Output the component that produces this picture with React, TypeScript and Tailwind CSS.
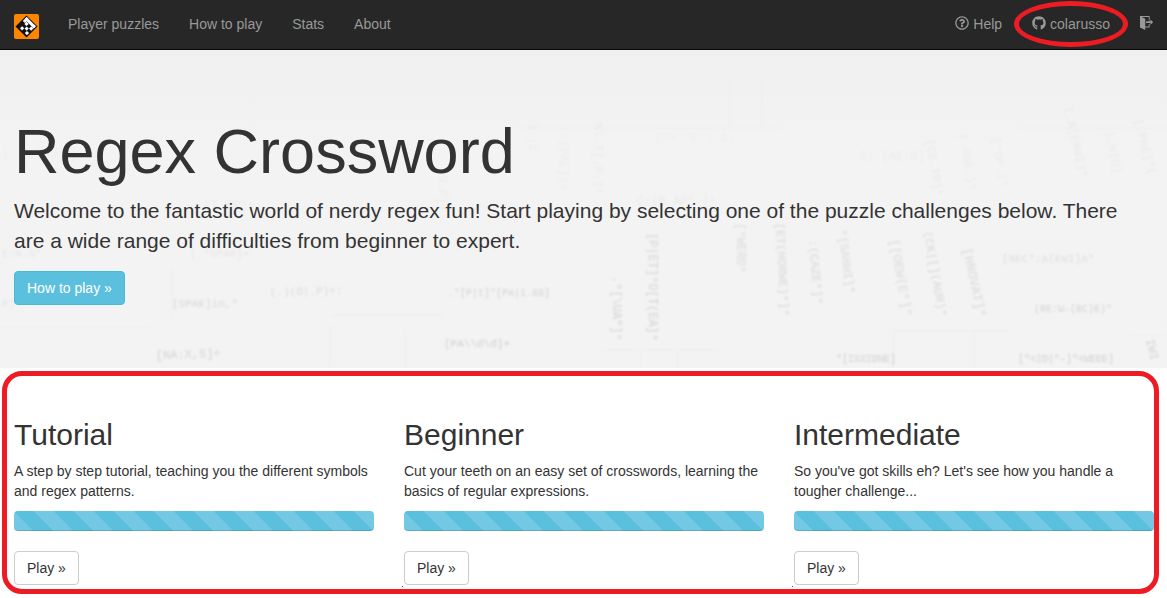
import { FaGithub, FaRegQuestionCircle } from "react-icons/fa";
import { ImExit } from "react-icons/im";

type Challenge = { title: string; text: string; dot: boolean };
type Clue = { x: number; y: number; text: string; rotate: number; size: number; opacity: number };

const links = ["Player puzzles", "How to play", "Stats", "About"];

const challenges: Challenge[] = [
  {
    title: "Tutorial",
    text: "A step by step tutorial, teaching you the different symbols and regex patterns.",
    dot: false,
  },
  {
    title: "Beginner",
    text: "Cut your teeth on an easy set of crosswords, learning the basics of regular expressions.",
    dot: true,
  },
  {
    title: "Intermediate",
    text: "So you've got skills eh? Let's see how you handle a tougher challenge...",
    dot: true,
  },
];

const clues: Clue[] = [
  { x: 172, y: 257, text: "[SPAE]in,*", rotate: 0, size: 11, opacity: 0.12 },
  { x: 270, y: 246, text: "(.)(O|.P)+:", rotate: -2, size: 11, opacity: 0.1 },
  { x: 156, y: 309, text: "[NA:X,S]+", rotate: -2, size: 12, opacity: 0.15 },
  { x: 2, y: 207, text: "E:N.S*", rotate: 0, size: 11, opacity: 0.06 },
  { x: 2, y: 257, text: "P)*", rotate: 0, size: 11, opacity: 0.06 },
  { x: 2, y: 108, text: "[.N.SPE.]+", rotate: 0, size: 14, opacity: 0.02 },
  { x: 190, y: 207, text: "[.*SPAN]+", rotate: 0, size: 11, opacity: 0.06 },
  { x: 204, y: 159, text: "(I.NP)+", rotate: 0, size: 12, opacity: 0.04 },
  { x: 448, y: 246, text: ".*[P|t]*[PA|i.88]", rotate: 0, size: 10, opacity: 0.14 },
  { x: 444, y: 297, text: "[PA\\\\d\\d]+", rotate: 0, size: 11, opacity: 0.16 },
  { x: 454, y: 197, text: "[.PAE]*+", rotate: 0, size: 12, opacity: 0.03 },
  { x: 655, y: 92, text: "[SN.*P.|.A]", rotate: 0, size: 12, opacity: 0.02 },
  { x: 637, y: 155, text: "C:[N.AP*.]*", rotate: 0, size: 12, opacity: 0.04 },
  { x: 860, y: 110, text: "S|.[AE.N]", rotate: 0, size: 12, opacity: 0.03 },
  { x: 613, y: 226, text: ".*[\\UA\"]*", rotate: 90, size: 12, opacity: 0.14 },
  { x: 649, y: 183, text: "[P|ET]*O[T(EA]*", rotate: 90, size: 12, opacity: 0.14 },
  { x: 560, y: 83, text: ".[PAE]|+", rotate: 90, size: 12, opacity: 0.03 },
  { x: 594, y: 73, text: "N\\.T[.P.]*", rotate: 90, size: 12, opacity: 0.04 },
  { x: 527, y: 73, text: "T.|F.", rotate: 90, size: 12, opacity: 0.03 },
  { x: 439, y: 118, text: "[N.P]+", rotate: 90, size: 12, opacity: 0.04 },
  { x: 737, y: 173, text: "[*WERO*", rotate: 90, size: 12, opacity: 0.1 },
  { x: 776, y: 173, text: "[ET(HORWE)*]*", rotate: 87, size: 12, opacity: 0.12 },
  { x: 809, y: 190, text: ":(CAZE*]*", rotate: 85, size: 12, opacity: 0.12 },
  { x: 838, y: 180, text: "*[SANWI]*", rotate: 82, size: 12, opacity: 0.11 },
  { x: 890, y: 190, text: "[[OEW(E*]*", rotate: 80, size: 13, opacity: 0.11 },
  { x: 924, y: 182, text: "(CK|[](AUR)*", rotate: 80, size: 12, opacity: 0.12 },
  { x: 963, y: 199, text: "[HNOVAT]*", rotate: 78, size: 13, opacity: 0.12 },
  { x: 926, y: 90, text: "[CE.TP]*", rotate: 81, size: 12, opacity: 0.05 },
  { x: 960, y: 84, text: "(.ANE.)*", rotate: 82, size: 12, opacity: 0.04 },
  { x: 992, y: 88, text: "[*OP.]*", rotate: 81, size: 12, opacity: 0.04 },
  { x: 1064, y: 58, text: "(.A[ENWI)*", rotate: 77, size: 12, opacity: 0.05 },
  { x: 1134, y: 70, text: "[.PAE]*(", rotate: 75, size: 12, opacity: 0.05 },
  { x: 1105, y: 82, text: "|.N[O]", rotate: 78, size: 12, opacity: 0.04 },
  { x: 1002, y: 212, text: "[NEC*:A(EWI]A*", rotate: 0, size: 11, opacity: 0.09 },
  { x: 1034, y: 262, text: "(RE:W-(BC)E)*", rotate: 0, size: 10, opacity: 0.14 },
  { x: 836, y: 312, text: "*[IXXIDNE]", rotate: 0, size: 10, opacity: 0.17 },
  { x: 1018, y: 312, text: "[*<ID|*-]*<WEEE]", rotate: 0, size: 10, opacity: 0.17 },
  { x: 1146, y: 290, text: "IWI", rotate: 76, size: 12, opacity: 0.16 },
];

const gridLines =
  "M0 277H150M330 265H443M172 217V265M602 300H720M641 300V318M677 300V318M893 281H1010M893 281V318M974 281V318M1130 285H1167M730 33V80M762 33V80M520 78H780M1020 78H1167M405 280V318M330 275V318";

function Backdrop() {
  return (
    <svg
      aria-hidden="true"
      className="pointer-events-none absolute inset-0 h-full w-full"
      viewBox="0 0 1167 318"
      preserveAspectRatio="xMidYMid slice"
    >
      <defs>
        <filter id="soft" x="-5%" y="-5%" width="110%" height="110%">
          <feGaussianBlur stdDeviation="1" />
        </filter>
      </defs>
      <g filter="url(#soft)" fontFamily="Liberation Mono, monospace" fill="#333">
        <path d={gridLines} fill="none" stroke="#000" strokeOpacity="0.012" strokeWidth="2" />
        {clues.map((c, i) => (
          <text
            key={i}
            transform={`translate(${c.x} ${c.y}) rotate(${c.rotate})`}
            fontSize={c.size}
            fillOpacity={c.opacity}
          >
            {c.text}
          </text>
        ))}
      </g>
    </svg>
  );
}

function Logo() {
  return (
    <svg className="h-[25px] w-[25px]" viewBox="0 0 25 25" aria-hidden="true">
      <rect width="25" height="25" rx="2" fill="#ff8400" />
      <path d="M12.5 1.5L23.5 12.5L12.5 23.5L1.5 12.5Z" fill="#111" />
      <g transform="translate(12.5 2.4) rotate(45)" fill="#fff">
        <rect x="0.6" y="0.4" width="13" height="3" />
        <rect x="0.6" y="0.4" width="3" height="5.4" />
        <rect x="10.6" y="0.4" width="3" height="3" />
        <rect x="3.8" y="3.8" width="3" height="3" />
        <rect x="10.4" y="3.8" width="3" height="3" />
        <rect x="7.2" y="7" width="3" height="3" />
        <rect x="3.8" y="10" width="3" height="3" />
        <rect x="10.6" y="10" width="3" height="3" />
      </g>
    </svg>
  );
}

export default function App() {
  return (
    <div className="bg-white font-['Liberation_Sans',Arial,sans-serif] text-sm leading-5 text-[#333]">
      <nav className="flex h-[50px] justify-between border-b border-[#080808] bg-[#272727] pr-[13px] pl-[14px] text-[#999]">
        <div className="flex">
          <a href="#" aria-label="Regex Crossword" className="mt-[14px] mr-[14px]">
            <Logo />
          </a>
          {links.map((l) => (
            <a key={l} href="#" className="px-[15px] py-[14px]">
              {l}
            </a>
          ))}
        </div>
        <div className="flex">
          <a href="#" className="flex gap-1 px-[15px] py-[14px]">
            <FaRegQuestionCircle className="mt-[2px] h-[14px] w-[14px]" />
            Help
          </a>
          <a href="#" className="relative flex gap-1 px-[15px] py-[14px]">
            <FaGithub className="mt-[2px] h-[14px] w-[14px]" />
            colarusso
            <span className="absolute -inset-x-[3px] top-[1px] bottom-[2px] rounded-[50%] border-[5px] border-[#ed1c24]" />
          </a>
          <a href="#" aria-label="Log out" className="py-[14px] pl-[15px]">
            <ImExit className="mt-[2px] h-[14px] w-[14px]" />
          </a>
        </div>
      </nav>

      <header className="relative overflow-hidden bg-linear-to-b from-[#f0f0f0] via-[#f3f3f3] via-30% to-[#f3f3f3] pt-[67px] pr-[13px] pb-[63px] pl-[14px]">
        <Backdrop />
        <div className="relative">
          <h1 className="mb-[10px] text-[63px] leading-[69px]">Regex Crossword</h1>
          <p className="mb-[15px] pr-5 text-[21px] leading-[30px]">
            Welcome to the fantastic world of nerdy regex fun! Start playing by selecting one of the
            puzzle challenges below. There are a wide range of difficulties from beginner to expert.
          </p>
          <a
            href="#"
            className="inline-block rounded border border-[#46b8da] bg-[#5bc0de] px-3 py-[6px] align-top text-white"
          >
            How to play »
          </a>
        </div>
      </header>

      <main className="relative pt-[50px] pr-[13px] pb-[13px] pl-[14px]">
        <div className="grid grid-cols-3 gap-[30px]">
          {challenges.map((c) => (
            <section key={c.title}>
              <h2 className="mb-[10px] text-[30px] leading-[33px]">{c.title}</h2>
              <p className="mb-[10px]">{c.text}</p>
              <div
                role="progressbar"
                aria-label={c.title}
                aria-valuenow={100}
                className="mb-5 h-5 rounded bg-[#5bc0de] bg-[linear-gradient(45deg,rgba(255,255,255,0.15)_25%,transparent_25%,transparent_50%,rgba(255,255,255,0.15)_50%,rgba(255,255,255,0.15)_75%,transparent_75%,transparent)] bg-size-[40px_40px] bg-position-[20px_0] shadow-[inset_0_-1px_0_rgba(0,0,0,0.15)]"
              />
              <div className="relative flex">
                <button className="rounded border border-[#ccc] bg-white px-3 py-[6px]">Play »</button>
                {c.dot && <span className="absolute -bottom-[2px] -left-[2px] h-px w-px bg-[#ed1c24]" />}
              </div>
            </section>
          ))}
        </div>
        <div className="pointer-events-none absolute top-[3px] right-2 bottom-1 left-[2px] rounded-[20px] border-[5px] border-[#ed1c24]" />
      </main>
    </div>
  );
}
